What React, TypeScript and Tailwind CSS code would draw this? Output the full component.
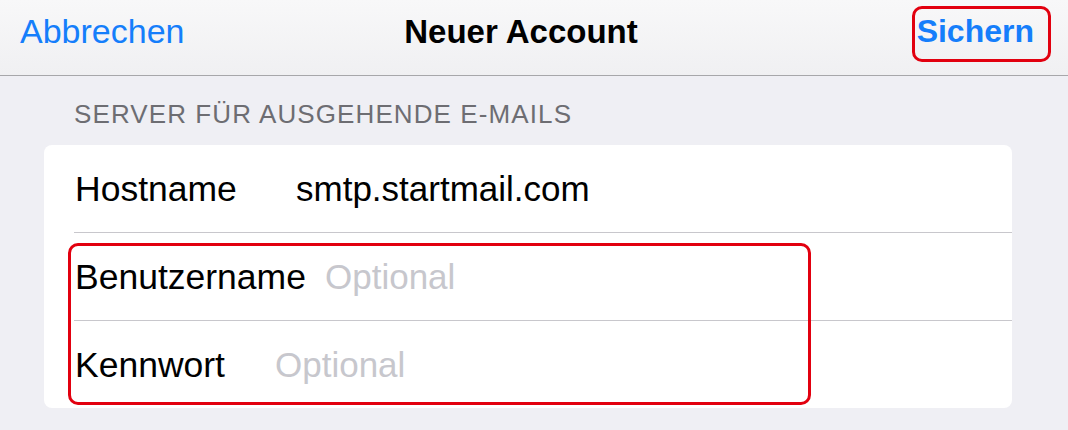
const rows = [
  { label: 'Hostname', value: 'smtp.startmail.com', placeholder: false, labelW: 'w-[221px]' },
  { label: 'Benutzername', value: 'Optional', placeholder: true, labelW: 'w-[250px]' },
  { label: 'Kennwort', value: 'Optional', placeholder: true, labelW: 'w-[200px]' },
];

export default function App() {
  return (
    <div className="relative w-[1068px] h-[430px] overflow-hidden bg-[#efeff4] font-['Liberation_Sans',Arial,sans-serif] text-black">
      {/* nav bar */}
      <div className="h-[76px] border-b border-[#a7a7aa] bg-gradient-to-b from-[#f8f8f9] to-[#f0f0f2] grid grid-cols-[1fr_auto_1fr] items-center pl-[20px] pr-[34px] pb-[12px]">
        <div className="text-[34px] leading-[39px] text-[#157efb]">Abbrechen</div>
        <div className="text-[33px] leading-[39px] font-bold mr-[12px]">Neuer Account</div>
        <div className="text-[32px] leading-[39px] font-bold text-[#157efb] justify-self-end">Sichern</div>
      </div>

      {/* section */}
      <div className="pt-[23px] pb-[16px] pl-[74px] text-[26px] leading-[30px] tracking-[1.1px] text-[#6d6d72]">
        SERVER FÜR AUSGEHENDE E-MAILS
      </div>

      <div className="ml-[44px] w-[968px] bg-white rounded-[8px]">
        {rows.map((r, i) => (
          <div key={r.label} className="pl-[30px]">
            <div
              className={
                i < rows.length - 1
                  ? 'h-[88px] flex items-center pl-[1px] border-b border-[#c8c7cc]'
                  : 'h-[87px] flex items-center pl-[1px]'
              }
            >
              <div className={`${r.labelW} shrink-0 text-[35.5px] leading-[40px]`}>{r.label}</div>
              <div className={r.placeholder ? 'text-[35px] leading-[40px] text-[#c7c7cd]' : 'text-[35px] leading-[40px]'}>
                {r.value}
              </div>
            </div>
          </div>
        ))}
      </div>

      {/* annotation marks */}
      <div className="absolute left-[912px] top-[6px] w-[139px] h-[56px] border-[3px] border-[#e2000f] rounded-[10px]" />
      <div className="absolute left-[68px] top-[243px] w-[743px] h-[162px] border-[3px] border-[#e2000f] rounded-[10px]" />
    </div>
  );
}
